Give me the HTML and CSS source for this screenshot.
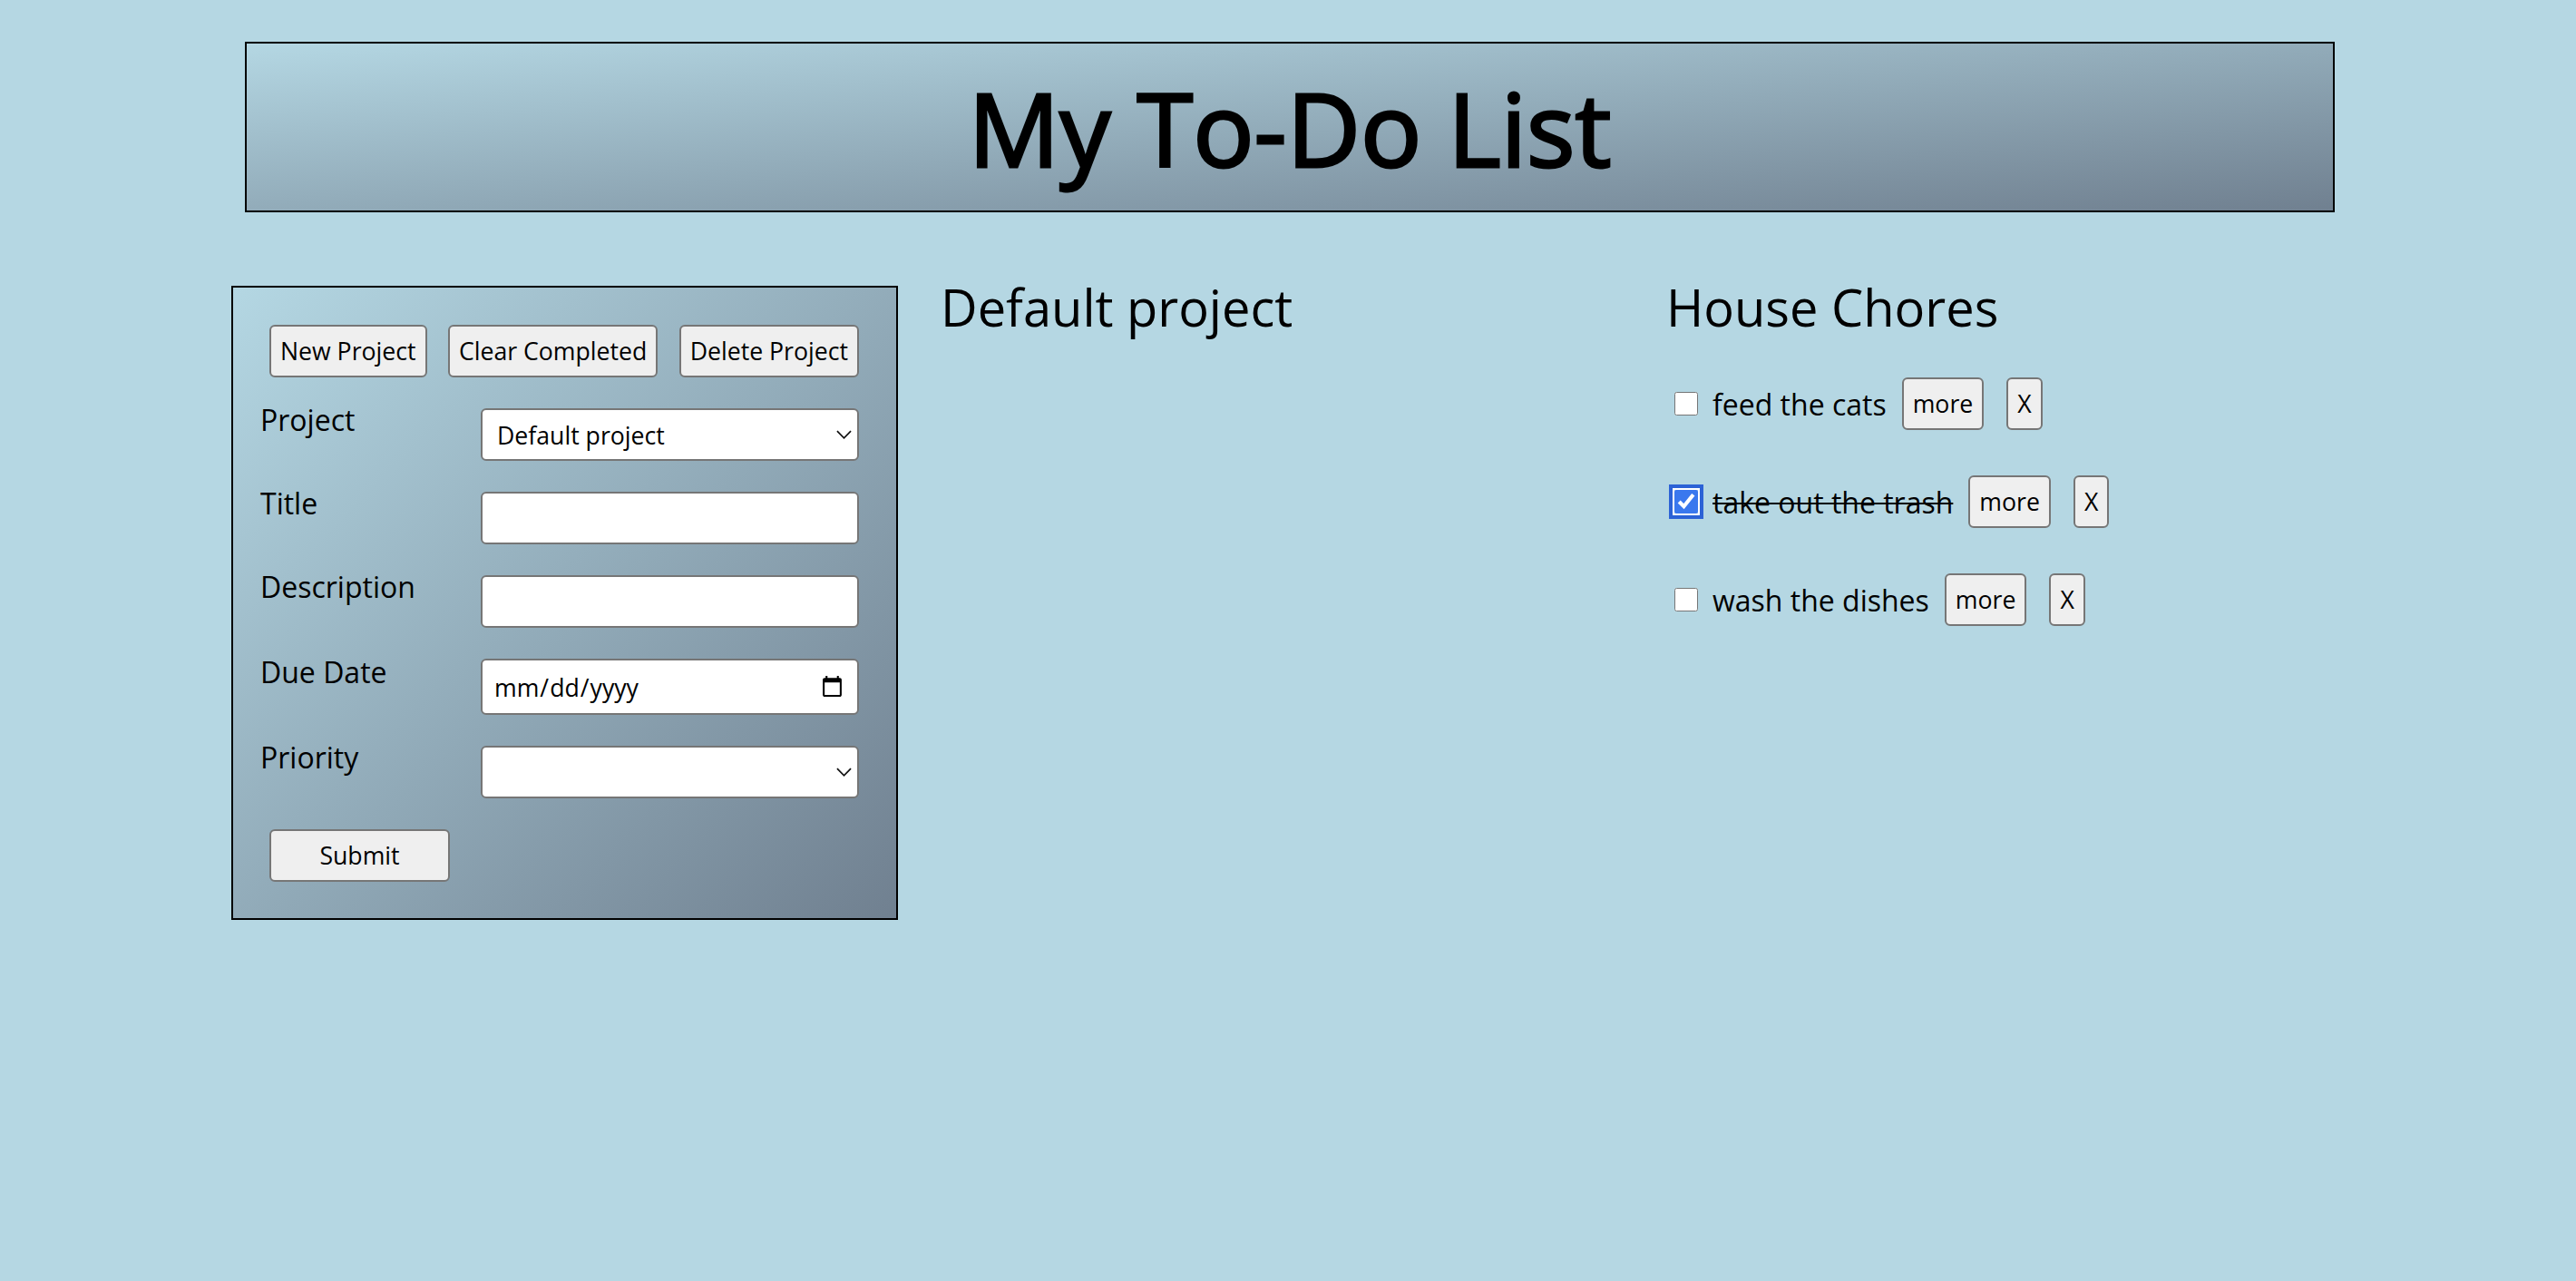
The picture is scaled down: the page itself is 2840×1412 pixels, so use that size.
FILE: index.html
```html
<!DOCTYPE html>
<html lang="en">
<head>
<meta charset="utf-8">
<title>My To-Do List</title>
<link rel="stylesheet" href="styles.css">
</head>
<body>
<header class="site-header">
  <h1 class="site-title">My To-Do List</h1>
</header>
<main class="layout">
  <form class="todo-form">
    <div class="form-actions">
      <button type="button" class="btn">New Project</button>
      <button type="button" class="btn">Clear Completed</button>
      <button type="button" class="btn">Delete Project</button>
    </div>
    <div class="form-row">
      <label class="form-label" for="project">Project</label>
      <div class="select-wrap">
        <select id="project" class="field field-select">
          <option>Default project</option>
          <option>House Chores</option>
        </select>
        <svg class="chevron" viewBox="0 0 18 10" aria-hidden="true"><path d="M1 1 9 9 17 1"/></svg>
      </div>
    </div>
    <div class="form-row">
      <label class="form-label" for="title">Title</label>
      <input id="title" class="field" type="text">
    </div>
    <div class="form-row">
      <label class="form-label" for="description">Description</label>
      <input id="description" class="field" type="text">
    </div>
    <div class="form-row">
      <label class="form-label form-label-date" for="due">Due Date</label>
      <input id="due" class="field field-date" type="date">
    </div>
    <div class="form-row">
      <label class="form-label" for="priority">Priority</label>
      <div class="select-wrap">
        <select id="priority" class="field field-select">
          <option></option>
          <option>Low</option>
          <option>Medium</option>
          <option>High</option>
        </select>
        <svg class="chevron" viewBox="0 0 18 10" aria-hidden="true"><path d="M1 1 9 9 17 1"/></svg>
      </div>
    </div>
    <button type="submit" class="btn btn-submit">Submit</button>
  </form>

  <section class="project">
    <h2 class="project-title">Default project</h2>
    <ul class="task-list"></ul>
  </section>

  <section class="project">
    <h2 class="project-title">House Chores</h2>
    <ul class="task-list">
      <li class="task">
        <input class="task-check" type="checkbox" aria-label="feed the cats">
        <span class="task-text">feed the cats</span>
        <button type="button" class="btn btn-more">more</button>
        <button type="button" class="btn btn-delete">X</button>
      </li>
      <li class="task">
        <input class="task-check is-focused" type="checkbox" checked aria-label="take out the trash">
        <span class="task-text is-done">take out the trash</span>
        <button type="button" class="btn btn-more">more</button>
        <button type="button" class="btn btn-delete">X</button>
      </li>
      <li class="task">
        <input class="task-check" type="checkbox" aria-label="wash the dishes">
        <span class="task-text">wash the dishes</span>
        <button type="button" class="btn btn-more">more</button>
        <button type="button" class="btn btn-delete">X</button>
      </li>
    </ul>
  </section>
</main>
</body>
</html>
```

FILE: styles.css
```css
html,
body {
  margin: 0;
  padding: 0;
}

body {
  background: #b5d7e3;
  font-family: "Open Sans", "Noto Sans", sans-serif;
  color: #000;
  min-height: 1412px;
}

/* Header */
.site-header {
  box-sizing: border-box;
  margin: 46px 266px 0 270px;
  padding: 13px 0 11px;
  border: 2px solid #000;
  background: linear-gradient(to bottom right, #b4d7e3, #708090);
}

.site-title {
  margin: 0;
  font-size: 112px;
  font-weight: 400;
  line-height: 160px;
  text-align: center;
  -webkit-text-stroke: 3px #000;
}

/* Main layout */
.layout {
  display: flex;
  align-items: flex-start;
  margin-top: 66px;
  padding-left: 255px;
}

/* Form panel */
.todo-form {
  box-sizing: border-box;
  width: 735px;
  margin: 15px 47px 0 0;
  padding: 41px 41px 40px 30px;
  border: 2px solid #000;
  background: linear-gradient(to bottom right, #b4d7e3, #708090);
  display: flex;
  flex-direction: column;
  gap: 34px;
}

.form-actions {
  display: flex;
  justify-content: space-between;
  margin-left: 10px;
}

.btn {
  box-sizing: border-box;
  height: 58px;
  padding: 0 10px;
  border: 2px solid #767676;
  border-radius: 6px;
  background: #efefef;
  color: #000;
  font-family: inherit;
  font-size: 26.67px;
  line-height: 1;
}

.form-row {
  display: grid;
  grid-template-columns: 243px 417px;
  align-items: start;
}

.form-label {
  font-size: 32px;
  line-height: 26px;
}

.form-label-date {
  padding-top: 2px;
}

.field {
  box-sizing: border-box;
  width: 417px;
  height: 58px;
  margin: 0;
  padding: 0 16px;
  border: 2px solid #767676;
  border-radius: 6px;
  background: #fff;
  color: #000;
  font-family: inherit;
  font-size: 26.67px;
}

.field-select {
  appearance: none;
  -webkit-appearance: none;
}

.field-date {
  height: 62px;
  padding: 0 12px 0 12px;
}

.select-wrap {
  position: relative;
  width: 417px;
  height: 58px;
}

.chevron {
  position: absolute;
  right: 8px;
  top: 24px;
  width: 17px;
  height: 10px;
  fill: none;
  stroke: #111;
  stroke-width: 1.8;
  pointer-events: none;
}

.btn-submit {
  width: 199px;
  margin-left: 10px;
  align-self: flex-start;
}

/* Projects */
.project {
  width: 800px;
  flex: none;
}

.project-title {
  margin: 0;
  font-size: 56px;
  font-weight: 400;
  line-height: 76px;
}

.task-list {
  list-style: none;
  margin: 40px 0 0;
  padding: 0;
  display: flex;
  flex-direction: column;
  gap: 50px;
}

.task {
  display: flex;
  align-items: center;
  height: 58px;
  font-size: 32px;
}

.task-check {
  width: 26px;
  height: 26px;
  margin: 0 16px 0 9px;
  accent-color: #3a78ee;
}

.task-check.is-focused {
  outline: 4px solid #2c62d6;
  outline-offset: 2px;
  box-shadow: 0 0 0 2px #fff;
  border-radius: 5px;
}

.task-text.is-done {
  text-decoration: line-through;
  text-decoration-thickness: 2px;
}

.btn-more {
  margin-left: 17px;
}

.btn-delete {
  margin-left: 25px;
}
```
